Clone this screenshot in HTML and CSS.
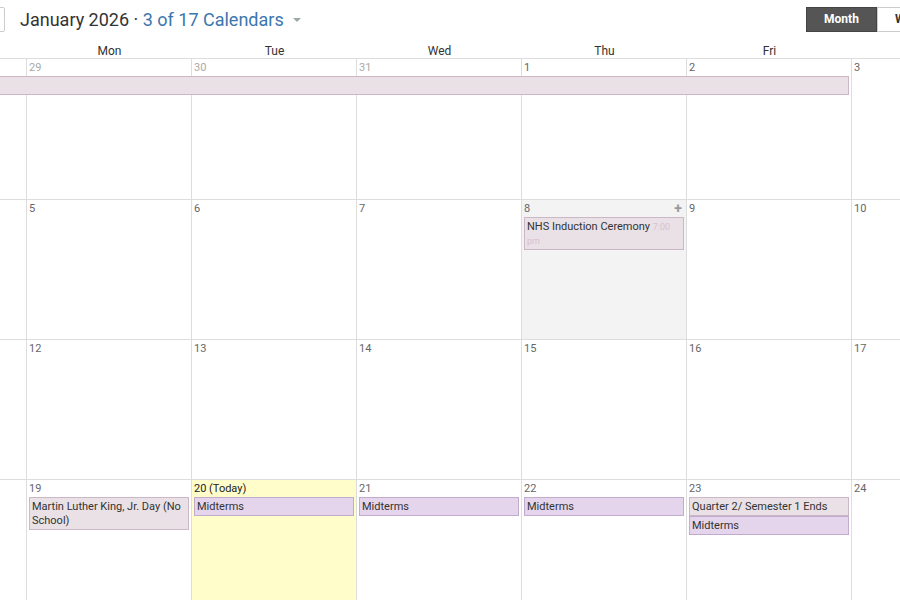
FILE: index.html
```html
<!DOCTYPE html>
<html>
<head>
<meta charset="utf-8">
<link rel="stylesheet" href="styles.css">
</head>
<body>
<div class="page">
  <div class="toolbar">
    <button class="nav-btn"></button>
    <div class="title">January 2026 · <span class="cals">3 of 17 Calendars</span><span class="caret"></span></div>
    <div class="views">
      <button class="view active">Month</button>
      <button class="view">Week</button>
    </div>
  </div>
  <div class="month">
    <div class="dow">
      <div>Sun</div><div>Mon</div><div>Tue</div><div>Wed</div><div>Thu</div><div>Fri</div><div>Sat</div>
    </div>

    <div class="week first">
      <div class="cell c1"></div><div class="cell c2"></div><div class="cell c3"></div><div class="cell c4"></div><div class="cell c5"></div><div class="cell c6"></div><div class="cell c7"></div>
      <div class="num c1 other">28</div><div class="num c2 other">29</div><div class="num c3 other">30</div><div class="num c4 other">31</div><div class="num c5">1</div><div class="num c6">2</div><div class="num c7">3</div>
      <div class="stack span-1-6"><div class="ev gray">Winter Break</div></div>
    </div>

    <div class="week">
      <div class="cell c1"></div><div class="cell c2"></div><div class="cell c3"></div><div class="cell c4"></div><div class="cell c5 hover"></div><div class="cell c6"></div><div class="cell c7"></div>
      <div class="num c1">4</div><div class="num c2">5</div><div class="num c3">6</div><div class="num c4">7</div><div class="num c5">8<span class="add">+</span></div><div class="num c6">9</div><div class="num c7">10</div>
      <div class="stack c5"><div class="ev gray">NHS Induction Ceremony <span class="time">7:00 pm</span></div></div>
    </div>

    <div class="week">
      <div class="cell c1"></div><div class="cell c2"></div><div class="cell c3"></div><div class="cell c4"></div><div class="cell c5"></div><div class="cell c6"></div><div class="cell c7"></div>
      <div class="num c1">11</div><div class="num c2">12</div><div class="num c3">13</div><div class="num c4">14</div><div class="num c5">15</div><div class="num c6">16</div><div class="num c7">17</div>
    </div>

    <div class="week">
      <div class="cell c1"></div><div class="cell c2"></div><div class="cell c3 today"></div><div class="cell c4"></div><div class="cell c5"></div><div class="cell c6"></div><div class="cell c7"></div>
      <div class="num c1">18</div><div class="num c2">19</div><div class="num c3 today-num">20 (Today)</div><div class="num c4">21</div><div class="num c5">22</div><div class="num c6">23</div><div class="num c7">24</div>
      <div class="stack c2"><div class="ev gray">Martin Luther King, Jr. Day (No School)</div></div>
      <div class="stack c3"><div class="ev purple">Midterms</div></div>
      <div class="stack c4"><div class="ev purple">Midterms</div></div>
      <div class="stack c5"><div class="ev purple">Midterms</div></div>
      <div class="stack c6">
        <div class="ev gray">Quarter 2/ Semester 1 Ends</div>
        <div class="ev purple">Midterms</div>
      </div>
    </div>
  </div>
</div>
</body>
</html>
```

FILE: styles.css
```css
html, body {
  margin: 0;
  padding: 0;
  background: #fff;
  overflow: hidden;
}
body {
  width: 900px;
  height: 600px;
  font-family: Roboto, "Liberation Sans", Arial, sans-serif;
  color: #333;
}
.page {
  width: 900px;
  height: 600px;
  overflow: hidden;
}
.toolbar {
  display: flex;
  align-items: center;
  height: 38px;
  width: 960px;
}
.nav-btn {
  margin-left: -30px;
  width: 35px;
  height: 25px;
  border: 1px solid #ccc;
  background: #fff;
  border-radius: 2px;
  padding: 0;
}
.title {
  margin-left: 15px;
  font-size: 18px;
  color: #333;
  display: flex;
  align-items: center;
  white-space: pre;
}
.cals {
  color: #3b77ae;
}
.caret {
  width: 0;
  height: 0;
  border-left: 4px solid transparent;
  border-right: 4px solid transparent;
  border-top: 4px solid #9aa;
  margin-left: 9px;
  margin-top: 1px;
}
.views {
  margin-left: auto;
  display: flex;
}
.view {
  height: 25px;
  padding: 0;
  font-family: Roboto, "Liberation Sans", Arial, sans-serif;
  font-size: 12px;
  font-weight: bold;
  border: 1px solid #ccc;
  background: #fff;
  color: #333;
  width: 83px;
  text-align: left;
  padding-left: 17px;
}
.view.active {
  width: 71px;
  text-align: center;
  padding-left: 0;
  background: #555;
  border-color: #444;
  color: #fff;
}
.month {
  margin-left: -139px;
  width: 1155px;
}
.dow {
  display: grid;
  grid-template-columns: repeat(7, 165px);
  height: 20px;
  border-bottom: 1px solid #ddd;
  font-size: 12px;
  color: #333;
}
.dow div {
  text-align: center;
  line-height: 26px;
  padding-left: 2px;
}
.week {
  display: grid;
  grid-template-columns: repeat(7, 165px);
  grid-template-rows: 17px 1fr;
  height: 140px;
}
.week.first {
  height: 141px;
}
.cell {
  grid-row: 1 / -1;
  border-left: 1px solid #ddd;
  border-bottom: 1px solid #ddd;
}
.cell.hover { background: #f3f3f3; }
.cell.today { background: #fffdc9; }
.c1 { grid-column: 1; }
.c2 { grid-column: 2; }
.c3 { grid-column: 3; }
.c4 { grid-column: 4; }
.c5 { grid-column: 5; }
.c6 { grid-column: 6; }
.c7 { grid-column: 7; }
.span-1-6 { grid-column: 1 / 7; }
.num {
  grid-row: 1;
  font-size: 11px;
  color: #666;
  padding-left: 3px;
  line-height: 18px;
  display: flex;
}
.num.other { color: #aaa; }
.num.today-num { color: #222; }
.add {
  margin-left: auto;
  margin-right: 4px;
  color: #999;
  font-size: 14px;
  font-weight: bold;
  line-height: 17px;
}
.stack {
  grid-row: 2;
  align-self: start;
  display: flex;
  flex-direction: column;
  gap: 0;
  padding: 0 2px 0 3px;
}
.ev {
  padding: 2px 2px 1px;
  font-size: 11px;
  line-height: 14px;
  color: #333;
  border: 1px solid;
  overflow: hidden;
}
.ev.gray {
  background: #e9e1e6;
  border-color: #cbb7c5;
}
.ev.purple {
  background: #e5d5ec;
  border-color: #c3abcd;
}
.time {
  color: #d9bfd0;
  font-size: 9px;
}
```
